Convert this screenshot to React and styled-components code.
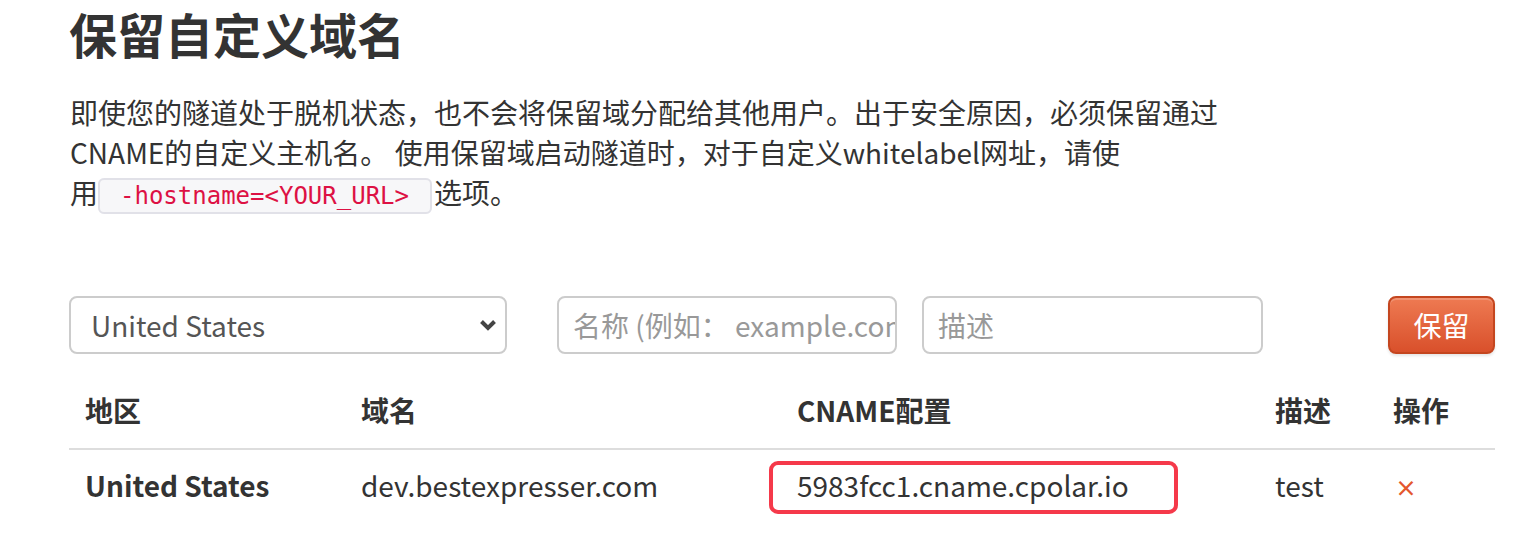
import React from "react";
import styled, { createGlobalStyle } from "styled-components";

const Global = createGlobalStyle`
  html, body { margin: 0; padding: 0; background: #fff; }
  body {
    font-family: "Noto Sans CJK SC", "Noto Sans", sans-serif;
    color: #333;
    font-size: 28px;
    line-height: 40px;
  }
`;

const Page = styled.div`
  padding: 0 39px 0 69px;
  width: 1426px;
`;

const Title = styled.h1`
  margin: -3px 0 0 0;
  font-size: 48px;
  line-height: 72px;
  font-weight: 700;
  color: #333;
`;

const Lead = styled.p`
  margin: 23px 0 0 1px;
  max-width: 1240px;
`;

const NoWrap = styled.span`
  white-space: nowrap;
`;

const Code = styled.code`
  font-family: "DejaVu Sans Mono", "Liberation Mono", monospace;
  font-size: 24px;
  line-height: 30px;
  color: #dd1144;
  background: #f7f7f9;
  border: 2px solid #e1e1e8;
  border-radius: 6px;
  padding: 2px 21px 2px 20px;
  margin: 0 2px 0 0;
  white-space: nowrap;
`;

const FormRow = styled.div`
  display: flex;
  align-items: center;
  margin-top: 84px;
`;

const Select = styled.div`
  width: 438px;
  height: 58px;
  box-sizing: border-box;
  border: 2px solid #ccc;
  border-radius: 8px;
  display: flex;
  align-items: center;
  padding: 0 8px 0 20px;
  color: #555;
  justify-content: space-between;
`;

const Input = styled.div`
  width: ${(p) => p.$w}px;
  height: 58px;
  box-sizing: border-box;
  border: 2px solid #ccc;
  border-radius: 8px;
  margin-left: ${(p) => p.$ml}px;
  display: flex;
  align-items: center;
  padding: 0 14px;
  color: #999;
  white-space: nowrap;
  overflow: hidden;
`;

const Button = styled.button`
  margin-left: auto;
  width: 107px;
  height: 58px;
  border: 2px solid #c4461f;
  border-radius: 8px;
  background: linear-gradient(#ee7a52, #d9502b);
  color: #fff;
  font-family: inherit;
  font-size: 28px;
  box-shadow: inset 0 2px 0 rgba(255,255,255,0.2), 0 2px 3px rgba(0,0,0,0.1);
`;

const Table = styled.table`
  margin-top: 22px;
  width: 1426px;
  border-collapse: collapse;
  table-layout: fixed;
`;

const Th = styled.th`
  text-align: left;
  padding: 14px 16px 18px;
  font-weight: 700;
  border-bottom: 2px solid #ddd;
  white-space: nowrap;
`;

const Td = styled.td`
  padding: 14px 16px 18px;
  position: relative;
  font-weight: ${(p) => (p.$bold ? 700 : 400)};
  white-space: nowrap;
`;

const Highlight = styled.span`
  position: absolute;
  left: -12px;
  top: 11px;
  width: 409px;
  height: 53px;
  box-sizing: border-box;
  border: 4px solid #f5394a;
  border-radius: 9px;
`;

const Remove = styled.span`
  color: #e4572e;
  font-size: 22px;
  font-weight: 700;
  padding-left: 2px;
`;

export default function App() {
  return (
    <>
      <Global />
      <Page>
        <Title>保留自定义域名</Title>
        <Lead>
          即使您的隧道处于脱机状态，也不会将保留域分配给其他用户。出于安全原因，必须保留通过CNAME的自定义主机名。
          使用保留域启动隧道时，对于自定义whitelabel网址，请使
          <NoWrap>
            用<Code>-hostname=&lt;YOUR_URL&gt;</Code>选项。
          </NoWrap>
        </Lead>
        <FormRow>
          <Select>
            <span>United States</span>
            <svg width="18" height="12" viewBox="0 0 18 12">
              <path d="M2.5 2.5 L9 9 L15.5 2.5" fill="none" stroke="#444" strokeWidth="4" />
            </svg>
          </Select>
          <Input $w={340} $ml={50}>名称 (例如： example.com)</Input>
          <Input $w={341} $ml={25}>描述</Input>
          <Button>保留</Button>
        </FormRow>
        <Table>
          <colgroup>
            <col style={{ width: 276 }} />
            <col style={{ width: 436 }} />
            <col style={{ width: 478 }} />
            <col style={{ width: 118 }} />
            <col style={{ width: 118 }} />
          </colgroup>
          <thead>
            <tr>
              <Th>地区</Th>
              <Th>域名</Th>
              <Th>CNAME配置</Th>
              <Th>描述</Th>
              <Th>操作</Th>
            </tr>
          </thead>
          <tbody>
            <tr>
              <Td $bold>United States</Td>
              <Td>dev.bestexpresser.com</Td>
              <Td>
                <Highlight />
                5983fcc1.cname.cpolar.io
              </Td>
              <Td>test</Td>
              <Td>
                <Remove>×</Remove>
              </Td>
            </tr>
          </tbody>
        </Table>
      </Page>
    </>
  );
}
